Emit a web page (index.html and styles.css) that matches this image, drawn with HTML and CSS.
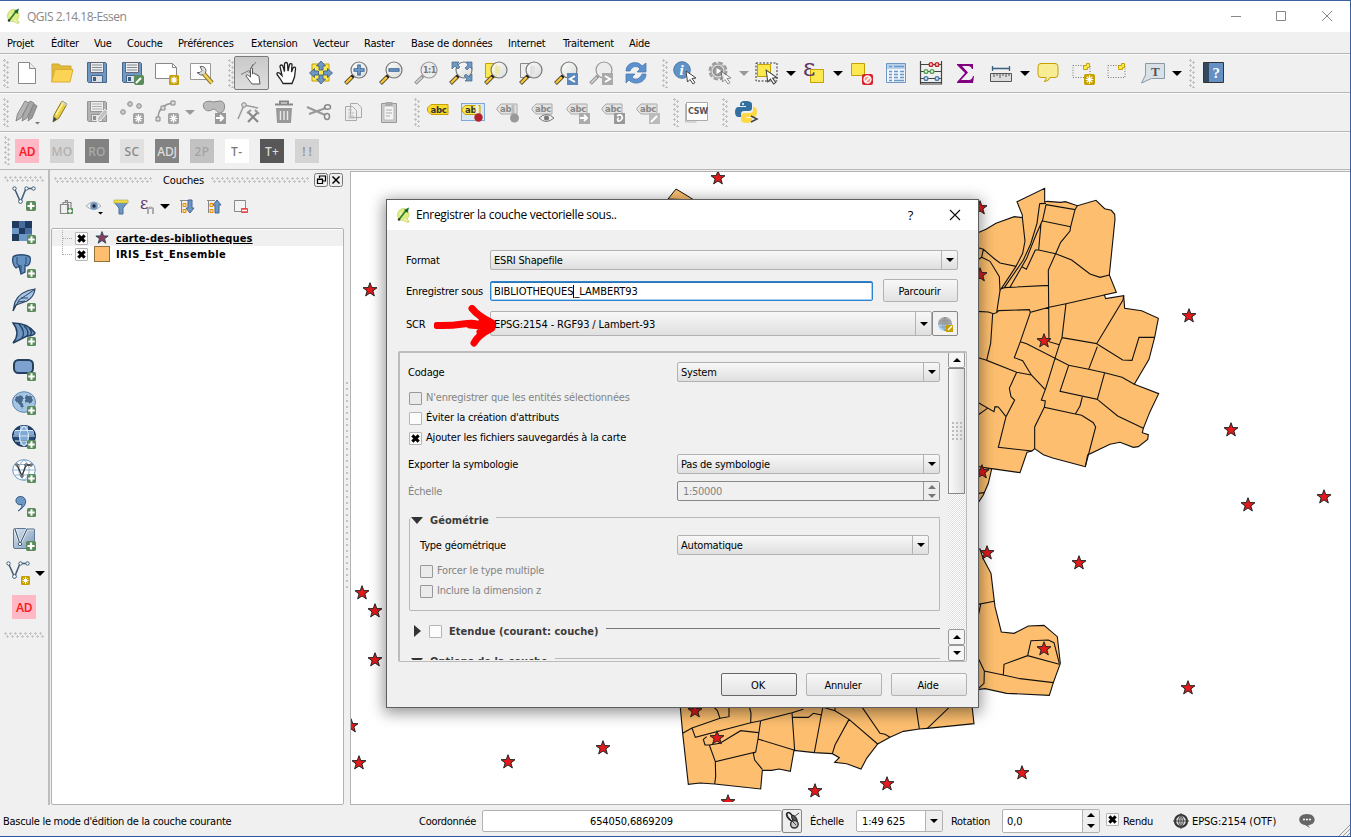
FILE: index.html
```html
<!DOCTYPE html>
<html lang="fr">
<head>
<meta charset="utf-8">
<title>QGIS 2.14.18-Essen</title>
<link rel="stylesheet" href="styles.css">
</head>
<body>
<svg class="defs" aria-hidden="true">
<defs>
<linearGradient id="lens" x1="0" y1="0" x2="1" y2="1"><stop offset="0" stop-color="#fff"/><stop offset="1" stop-color="#d6dad6"/></linearGradient>
<linearGradient id="steel" x1="0" y1="0" x2="1" y2="1"><stop offset="0" stop-color="#dce6f0"/><stop offset="1" stop-color="#7d98b8"/></linearGradient>
<path id="pin" transform="translate(8 8)" d="M0-7.300L1.750-2.400 7-2.300 2.850.9 4.350 5.900 0 2.950-4.350 5.900-2.850.9-7-2.300-1.750-2.400z"/>
</defs>
<symbol id="logo" viewBox="0 0 16 16"><path d="M7 1.500C3 2 1 6 1.500 9c.5 3.500 3 5 6 4.500l4 2 2-1-2.500-2.500c2-2 2.500-5 1.500-7C11.500 2.500 9.500 1.200 7 1.500z" fill="#dcec82" stroke="#b9cd5c" stroke-width=".6"/><path d="M4 6l2 2-2 3M8 12l3 2" stroke="#f3f8c0" stroke-width="1.400" fill="none"/><path d="M3 12.500L10 3.500" stroke="#2b7d32" stroke-width="1.700"/><path d="M8 3L13 .5 11.500 6z" fill="#17662a"/><circle cx="3" cy="12.500" r="1.200" fill="#263b20"/></symbol>
<symbol id="plus" viewBox="0 0 9 9"><rect width="9" height="9" rx="1.500" fill="#5a8c5a"/><path d="M4.500 1.300v6.400M1.300 4.500h6.400" stroke="#fff" stroke-width="2"/></symbol>
<symbol id="spark" viewBox="0 0 10 10"><rect width="10" height="10" rx="1.500" fill="#c4a000"/><path d="M5 1.200v7.600M1.500 5h7M2.500 2.500l5 5M7.500 2.500l-5 5" stroke="#fff" stroke-width="1.100"/></symbol>
<symbol id="sparkg" viewBox="0 0 10 10"><rect width="10" height="10" rx="1.500" fill="#a3a3a3"/><path d="M5 1.200v7.600M1.500 5h7M2.500 2.500l5 5M7.500 2.500l-5 5" stroke="#fff" stroke-width="1.100"/></symbol>
<symbol id="mag" viewBox="0 0 24 24"><path d="M9 15L1.500 22.500" stroke="#4b4b3a" stroke-width="4"/><path d="M8 16L2 22" stroke="#fcc32f" stroke-width="2.400"/><path d="M10 14l-2 2" stroke="#111" stroke-width="3"/><circle cx="15" cy="9" r="8" fill="url(#lens)" fill-opacity=".86" stroke="#777" stroke-width="1.200"/></symbol>
<symbol id="magg" viewBox="0 0 24 24"><path d="M9 15L1.500 22.500" stroke="#888" stroke-width="3.500"/><path d="M8 16L2 22" stroke="#ccc" stroke-width="2"/><circle cx="15" cy="9" r="8" fill="#ececec" stroke="#999" stroke-width="1.200"/></symbol>
<symbol id="floppy" viewBox="0 0 24 24"><path d="M2.500 1.500h18l1 1v19h-18l-1-1z" fill="#6f98c5" stroke="#48678b"/><path d="M5.500 1.500h13v10h-13z" fill="#e9eef2" stroke="#667"/><path d="M7 4h10M7 6.500h10M7 9h10" stroke="#888"/><path d="M6.500 14.500h11v7h-11z" fill="#dde1e4" stroke="#48678b"/><path d="M8 16h3v4H8z" fill="#3b5d85"/></symbol>
<symbol id="cursor" viewBox="0 0 12 15"><path d="M1 1l10 7-4 .5 3 4-2 1.500-3-4.500L2.500 12z" fill="#fff" stroke="#444"/></symbol>
<symbol id="tag" viewBox="0 0 22 12"><path d="M5 1h16v10H5L1 7V5z" fill="#e3e3e3" stroke="#aaa"/></symbol>
<symbol id="vec" viewBox="0 0 24 18"><path d="M2.500 2.500L8.500 16 14 2.500h7" fill="none" stroke="#3e5b77" stroke-width="1.500"/><g fill="#fff" stroke="#3e5b77"><circle cx="2.500" cy="2.500" r="1.700"/><circle cx="8.500" cy="15.500" r="1.900"/><circle cx="14.500" cy="2.500" r="1.700"/><circle cx="21.500" cy="2.500" r="1.700"/></g></symbol>
</svg>

<div class="window">
<header class="titlebar"><svg class="logo"><use href="#logo"/></svg><span class="apptitle">QGIS 2.14.18-Essen</span>
<svg class="winbtns" viewBox="0 0 110 14"><path d="M1 7.500h10M46.500 2.500h9v9h-9zM92 2l10 10M102 2L92 12" fill="none" stroke="#888"/></svg></header>
<nav class="menubar"><span>Projet</span><span>Éditer</span><span>Vue</span><span>Couche</span><span>Préférences</span><span>Extension</span><span>Vecteur</span><span>Raster</span><span>Base de données</span><span>Internet</span><span>Traitement</span><span>Aide</span></nav>

<div class="toolbar">
<i class="grip first"></i>
<b class="c"><svg><path d="M3.500 1.500h11l6 6v15h-17z" fill="#fff" stroke="#888"/><path d="M14.500 1.500v6h6" fill="#eee" stroke="#888"/></svg></b>
<b class="c"><svg><path d="M2 20V3h7l2 2h10v4" fill="#e2b93a" stroke="#d1a52f"/><path d="M1.500 21L5 8.500h18L20 21z" fill="#fcd354" stroke="#dbac35"/></svg></b>
<b class="c"><svg><use href="#floppy"/></svg></b>
<b class="c"><svg><use href="#floppy"/><rect x="14" y="14" width="10" height="10" rx="2" fill="#5a8c5a"/><path d="M16 22l5-5" stroke="#fff" stroke-width="2"/></svg></b>
<b class="c"><svg><path d="M.5 2.500h17l4 4v11H.5z" fill="#fff" stroke="#888"/><path d="M17.500 2.500v4h4" fill="none" stroke="#888"/><use href="#spark" x="14" y="14" width="10" height="10"/></svg></b>
<b class="c"><svg><path d="M.5 2.500h20v16H.5z" fill="#fff" stroke="#999"/><path d="M10 5.500q5-1 6 4l-1 4q-5 2-8-2l3 0 2-2z" fill="#ddd" stroke="#666"/><path d="M14 13l8 9" stroke="#8b7122" stroke-width="4.500"/><path d="M14 13l8 9" stroke="#f1d460" stroke-width="2.500"/></svg></b>
<i class="grip"></i>
<b class="c on"><svg><path d="M13 23l-3-4-3-4c0-1.500 1.500-1.500 2.500-.5l2 1.500V8c0-1.800 2-1.800 2 0V13c1-1.500 2.500-1 2.500.5 1-1 2-.5 2 1 1.500-.5 2 .5 2 1.500l1 7z" fill="#fff" stroke="#555"/><path d="M11 8L17 1M2 13.500l8-4M10 12l4-9" stroke="#777" fill="none"/></svg></b>
<b class="c"><svg><path d="M7 22.500l-3-5-3-4c-.5-2.500 2-2.500 3.500-.5l1.500 1.500-2-9c0-2 2.500-2 3 0l1.500 5V3c0-2 3-2 3 0l.5 7 1.500-6.500c.5-1.500 3-1 2.500.5l-.5 7 1.500-4c1-1.500 3-1 2.500 1l-1 8-2.500 6.500z" fill="#fff" stroke="#222" stroke-width="1.300" transform="translate(2 0)"/></svg></b>
<b class="c"><svg><path d="M3 3h17v17H3z" fill="#fce94f" stroke="#c4a000"/><path d="M12 0l4.500 5h-2.500v4h-4V5H7.500zM12 23l-4.500-5h2.500v-4h4v4h2.500zM.5 12l5-4.500v2.500h4v4h-4v2.500zM23.500 12l-5-4.500v2.500h-4v4h4v2.500z" fill="#6d97c4" stroke="#38587c" stroke-width=".8"/></svg></b>
<b class="c"><svg><use href="#mag"/><path d="M15 3.500v11M9.500 9h11" stroke="#355f92" stroke-width="3.500"/><path d="M15 4.500v9M10.500 9h9" stroke="#6d97c4" stroke-width="1.800"/></svg></b>
<b class="c"><svg><use href="#mag"/><path d="M9.500 9h11" stroke="#355f92" stroke-width="3.500"/><path d="M10.500 9h9" stroke="#6d97c4" stroke-width="1.600"/></svg></b>
<b class="c"><svg><use href="#magg"/><text x="9" y="12" class="one">1:1</text></svg></b>
<b class="c"><svg><use href="#mag"/><path d="M3 1h7l-2 2 3 3-2 2-3-3-3 3zM23 1v7l-2-2-3 3-2-2 3-3-2-3zM23 20h-7l2-2-3-3 2-2 3 3 3-3z" fill="#6d97c4" stroke="#446487" stroke-width=".7"/></svg></b>
<b class="c"><svg><path d="M1.500 2.500h11v14h-11z" fill="#fce94f" stroke="#c4a000"/><use href="#mag"/><path d="M11 5h5v8h-5z" fill="#eee79b" opacity=".8"/></svg></b>
<b class="c"><svg><path d="M1.500 2.500h11v14h-11z" fill="#eee" stroke="#888"/><use href="#mag"/><path d="M11 5h5v8h-5z" fill="#ddd" opacity=".7"/></svg></b>
<b class="c"><svg><use href="#mag"/><path d="M13 12h11v12H13z" fill="#5a8abd"/><path d="M21 15l-5 3 5 3" fill="none" stroke="#fff" stroke-width="2"/></svg></b>
<b class="c"><svg><use href="#magg"/><path d="M13 12h11v12H13z" fill="#aaa"/><path d="M16 15l5 3-5 3" fill="none" stroke="#fff" stroke-width="2"/></svg></b>
<b class="c"><svg><path d="M2 10C2 1 14-1 18 5l4-3v9h-9l3-3c-3-4-8-3-10 2zM22 13c0 9-12 12-17 6l-3 3v-9h9l-3 3c3 4 8 2 10-3z" fill="#5d92cf" stroke="#4174ad" stroke-width=".7"/></svg></b>
<i class="grip g3"></i>
<b class="c"><svg><circle cx="9" cy="9" r="8.300" fill="#5f93c7" stroke="#4a78a6"/><text x="6.500" y="14" class="info">i</text><use href="#cursor" x="12" y="9" width="12" height="15"/></svg></b>
<b class="c"><svg><circle cx="10" cy="10" r="8.500" fill="#ddd" stroke="#999" stroke-width="2" stroke-dasharray="4.500 2.200"/><circle cx="10" cy="10" r="7" fill="#ddd" stroke="#999"/><circle cx="10" cy="10" r="4.800" fill="#999" stroke="#888"/><path d="M8.500 7l5 3-5 3z" fill="#fff"/><use href="#cursor" x="12" y="9" width="12" height="15" opacity=".6"/></svg></b><i class="dd off"></i>
<b class="c"><svg><path d="M1 2h21v18H1z" fill="none" stroke="#333" stroke-dasharray="2 1.500"/><path d="M2.500 3.500h13v12h-13z" fill="#fce94f" stroke="#c4a000"/><use href="#cursor" x="10" y="8" width="13" height="16"/></svg></b><i class="dd"></i>
<b class="c"><svg><path d="M8.500 8.500h13v13h-13z" fill="#fce94f" stroke="#c4a000"/><text x="1" y="15" class="eps">ε</text></svg></b><i class="dd"></i>
<b class="c"><svg><path d="M2.500 2.500h13v12h-13z" fill="#fce94f" stroke="#c4a000"/><rect x="13" y="13" width="11" height="11" rx="2" fill="#d8232b"/><circle cx="18.500" cy="18.500" r="3.500" fill="#e98" stroke="#fff" stroke-width="1.300"/><path d="M16 21l5-5" stroke="#fff" stroke-width="1.400"/></svg></b>
<b class="c"><svg><path d="M2.500 2.500h19v19h-19z" fill="#eef5fc" stroke="#6d97c4"/><path d="M3 3h18v5H3z" fill="#b8d2ec"/><path d="M5 5.500h3M10 5.500h10M5 10.500h3M10 10.500h4M16 10.500h4M5 13.500h3M10 13.500h4M16 13.500h4M5 16.500h3M10 16.500h4M16 16.500h4M5 19.500h3M10 19.500h10" stroke="#6d97c4" stroke-width="1.300"/></svg></b>
<b class="c"><svg><path d="M1.500 0v23h21V0M2 3.500h20M2 10.500h20M2 17.500h20M1 21.500h22" fill="none" stroke="#444" stroke-width="1.200"/><g fill="#f9c6c6" stroke="#b22" stroke-width="1.300"><circle cx="12" cy="3.500" r="1.900"/><circle cx="18" cy="3.500" r="1.900"/></g><g fill="#cfc" stroke="#5a9a5a" stroke-width="1.300"><circle cx="7" cy="10.500" r="1.900"/><circle cx="13" cy="10.500" r="1.900"/></g><g fill="#cdf" stroke="#47789f" stroke-width="1.300"><circle cx="7" cy="17.500" r="1.900"/><circle cx="18" cy="17.500" r="1.900"/></g></svg></b>
<b class="c"><svg><path d="M3 3h16v5h-1q-1-3-4-3H8l6 6.500L7 19h8q3 0 4-4h1l-1 7H3v-1l8-9L3 4z" fill="#800080"/></svg></b>
<b class="c"><svg><path d="M3 7.500h18M3.500 5v5M20.500 5v5" stroke="#39607d" stroke-width="1.300"/><path d="M1.500 12.500h21v8h-21z" fill="#ddd" stroke="#555"/><path d="M5 13v3M8 13v2M11 13v4M14 13v2M17 13v3M20 13v2" stroke="#555"/></svg></b><i class="dd"></i>
<b class="c"><svg><path d="M5 2.500h14q3 0 3 3v8q0 3-3 3h-5q-1 4-6 4 3-1 2-4H5q-3 0-3-3v-8q0-3 3-3z" fill="#f8ec95" stroke="#c4a000"/></svg></b>
<b class="c"><svg><path d="M2 4.500h17v12H2z" fill="none" stroke="#777" stroke-dasharray="1 1.500"/><path d="M12.500 7.500v-3h3v-2h3v4h-2v2h-4z" fill="#fce94f" stroke="#c4a000"/><use href="#spark" x="13" y="13" width="11" height="11"/></svg></b>
<b class="c"><svg><path d="M2 4.500h17v12H2z" fill="none" stroke="#777" stroke-dasharray="1 1.500"/><path d="M12.500 7.500v-3h3v-2h3v4h-2v2h-4z" fill="#fce94f" stroke="#c4a000"/></svg></b>
<b class="c"><svg><path d="M4.500 2.500h19v15h-13L.5 22l4-8z" fill="#d8e1e7" stroke="#8a9aa5"/><text x="10" y="15" class="tee">T</text></svg></b><i class="dd"></i>
<i class="grip g4"></i>
<b class="c"><svg><path d="M1.500 1.500h20v20h-20z" fill="#6590c4" stroke="#333"/><path d="M2 2h5v19H2z" fill="#34495e"/><text x="10.500" y="17" class="help">?</text></svg></b>
</div>

<div class="toolbar r2">
<i class="grip first"></i>
<b class="c"><svg><path d="M1 21l1.500-7L10 1l4 2-8 15z" fill="#b5b5b5" stroke="#888"/><path d="M7 21l1.500-7L15 1l4 2-7 15z" fill="#aaa" stroke="#888"/><path d="M13 21l1-6L19 4l3 2-5 12z" fill="#999" stroke="#888"/><path d="M20 22h5l-2.500 2.500z" fill="#777"/></svg></b>
<b class="c"><svg><path d="M3 22l1-7L12 1l5 3-8 14z" fill="#e9cf42" stroke="#86752d"/><path d="M12 1l5 3-1 2-5-3z" fill="#ccc"/><path d="M6 15l7-12" stroke="#fff59b" stroke-width="1.500"/><path d="M3 22l1-5 3 2z" fill="#444"/></svg></b>
<b class="c"><svg class="gray"><use href="#floppy"/><path d="M12 22l1-5 7-8 3 3-7 8z" fill="#aaa" stroke="#eee"/></svg></b>
<b class="c"><svg><g fill="#ccc" stroke="#888"><circle cx="3" cy="12" r="2.300"/><circle cx="10" cy="4" r="2.300"/><circle cx="19" cy="6" r="2.300"/></g><use href="#sparkg" x="13" y="13" width="11" height="11"/></svg></b>
<b class="c"><svg><path d="M3 19C3 9 8 4 19 3" fill="none" stroke="#999" stroke-width="1.500"/><path d="M1 17h4v4H1zM6 6h4v4H6zM16 1h4v4h-4z" fill="#ddd" stroke="#888"/><use href="#sparkg" x="13" y="13" width="11" height="11"/></svg></b><i class="dd off"></i>
<b class="c"><svg><path d="M2 8C-1 2 6 0 11 2l7-1c6 0 6 10 1 12-5 0-4-4-8-4-3 3-8 2-9-1z" fill="#bbb" stroke="#888"/><path d="M13 13h11v11H13z" fill="#999"/><path d="M14 18h7M18 15l3 3-3 3" stroke="#fff" stroke-width="2" fill="none"/></svg></b>
<b class="c"><svg><path d="M1 19L7 5l14 3" fill="none" stroke="#999" stroke-width="1.500"/><circle cx="7" cy="5" r="2.300" fill="#ddd" stroke="#888"/><path d="M11 12l10 10M11 22l10-10" stroke="#888" stroke-width="2.200"/><path d="M10 13l4-3M18 10l4 4" stroke="#999" stroke-width="2"/></svg></b>
<b class="c"><svg><path d="M3 4.500h18M8 4V1.500h8V4" fill="none" stroke="#888" stroke-width="2"/><path d="M4 8h16l-1 15H5z" fill="#999"/><path d="M8.500 11v9M12 11v9M15.500 11v9" stroke="#e8e8e8" stroke-width="1.500"/></svg></b>
<b class="c"><svg><path d="M0 7l18 8M2 14L19 8" stroke="#999" stroke-width="2"/><ellipse cx="20.500" cy="7" rx="3" ry="2.300" fill="none" stroke="#888" stroke-width="1.500"/><ellipse cx="20" cy="16.500" rx="2.500" ry="3" fill="none" stroke="#888" stroke-width="1.500"/></svg></b>
<b class="c"><svg><path d="M8.500 3.500h7l4 4v10h-11zM3.500 6.500h7l4 4v10h-11z" fill="#eee" stroke="#aaa"/><path d="M6 10h4M6 13h6M6 16h6M6 18h6" stroke="#bbb"/></svg></b>
<b class="c"><svg><path d="M4.500 3.500h15v19h-15z" fill="#ccc" stroke="#999"/><path d="M7 6h10v14H7z" fill="#f4f4f4" stroke="#bbb"/><path d="M8.500 2h7v4h-7z" fill="#aaa"/><path d="M9 10h6M9 13h6M9 16h4" stroke="#aaa"/></svg></b>
<i class="grip g5"></i>
<b class="c"><svg><path d="M5 4.500h17v10H5L1.500 11V8z" fill="#fcd92b" stroke="#c4a000"/><text x="4.500" y="13" class="abc">abc</text></svg></b>
<b class="c sel"><svg><path d="M4 5.500h15v9H4L1 11V9z" fill="#fce94f" stroke="#c4a000"/><text x="4" y="13" class="abc">ab</text><path d="M16 5v9" stroke="#eee" stroke-width="3"/><circle cx="17.500" cy="17.500" r="4.200" fill="#b3222a"/></svg></b>
<b class="c"><svg><use href="#tag" y="3" width="22" height="12"/><text x="4" y="12" class="abc g">ab</text><path d="M17 5v9" stroke="#bbb" stroke-width="3"/><circle cx="18.500" cy="18" r="4.500" fill="#999"/></svg></b>
<b class="c"><svg><use href="#tag" y="3" width="22" height="12"/><text x="4" y="12" class="abc g">abc</text><path d="M8 18q8-7 15 0-8 7-15 0z" fill="#eee" stroke="#777"/><circle cx="15.500" cy="18" r="2.500" fill="#777"/></svg></b>
<b class="c"><svg><use href="#tag" y="3" width="22" height="12"/><text x="4" y="12" class="abc g">abc</text><path d="M13 13h11v11H13z" fill="#aaa"/><path d="M14 18h7M18 15l3 3-3 3" stroke="#fff" stroke-width="1.800" fill="none"/></svg></b>
<b class="c"><svg><use href="#tag" y="3" width="22" height="12"/><text x="4" y="12" class="abc g">abc</text><path d="M13 13h11v11H13z" fill="#999"/><path d="M16 16c4-3 7 1 4 4s-5-1-2-2" stroke="#fff" stroke-width="1.600" fill="none"/></svg></b>
<b class="c"><svg><use href="#tag" y="3" width="22" height="12"/><text x="4" y="12" class="abc g">abc</text><path d="M13 13h11v11H13z" fill="#bbb"/><path d="M15 22l6-6" stroke="#fff" stroke-width="2"/></svg></b>
<i class="grip g6"></i>
<b class="c"><svg><path d="M.5 4v18h11" fill="none" stroke="#bbb"/><path d="M1.500 2.500h21v18h-21z" fill="#fff" stroke="#aaa"/><text x="3" y="14" class="csw">CSW</text></svg></b>
<i class="grip g7"></i>
<b class="c"><svg><path d="M12 1C6 1 6 3 6 6h6v1H4C0 7 0 17 4 17h3v-3q0-3 3-3h5q3 0 3-3V4c0-2-3-3-6-3z" fill="#33709f"/><path d="M12 23c6 0 6-2 6-5h-6v-1h8c4 0 4-10 0-10h-1v3q0 3-3 3h-5q-4 0-4 3v4c0 2 2 3 5 3z" fill="#ffd845"/><circle cx="9" cy="4" r="1" fill="#fff"/><path d="M17 16l6 3-6 3" fill="none" stroke="#444" stroke-width="1.500"/></svg></b>
</div>

<div class="toolbar r3"><i class="grip first"></i>
<b class="c"><span class="sq ad">AD</span></b><b class="c"><span class="sq mo">MO</span></b><b class="c"><span class="sq ro">RO</span></b><b class="c"><span class="sq sc">SC</span></b><b class="c"><span class="sq adj">ADJ</span></b><b class="c"><span class="sq p2">2P</span></b><b class="c"><span class="sq tm">T-</span></b><b class="c"><span class="sq tp">T+</span></b><b class="c"><span class="sq ex">!!</span></b>
</div>

<main class="work">
<aside class="side">
<i class="hgrip"></i>
<b class="v"><svg><use href="#vec" width="24" height="18"/><use href="#plus" x="14" y="15" width="10" height="10"/></svg></b>
<b class="v"><svg><path d="M0 1h20v20H0z" fill="#6d97c4"/><path d="M0 1h7v7H0zM13 1h7v7h-7zM7 8h6v6H7zM0 14h7v7H0z" fill="#1f3a5f"/><path d="M7 1h6v7H7zM13 8h7v6h-7z" fill="#476d9c"/><use href="#plus" x="15" y="15" width="9" height="9"/></svg></b>
<b class="v"><svg><path d="M1 3c3-3 13-3 17 0 1 3 0 8-3 9l-2-1v7l-4 2-2-8-3 2c-3-2-4-8-3-11z" fill="#6591c2" stroke="#294c75" stroke-width="1.300"/><path d="M5 3v7l3 2M14 3v7M9 11v7" fill="none" stroke="#294c75"/><use href="#plus" x="15" y="15" width="9" height="9"/></svg></b>
<b class="v"><svg><path d="M1 23L3 14Q8 3 23 1q-1 8-8 12L4 17z" fill="#a8c7e8" stroke="#2c4662" stroke-width="1.200"/><path d="M1 23L7 12 22 2M6 14l7-1M9 10l7 0" fill="none" stroke="#2c4662"/><use href="#plus" x="15" y="15" width="9" height="9"/></svg></b>
<b class="v"><svg><path d="M1 1q15 0 22 10-1 3-8 3L1 21Q9 11 1 1z" fill="#6d97c4" stroke="#243f60" stroke-width="1.400"/><path d="M7 2q7 8 3 14M12 4q6 5 3 11M17 6q4 4 1 8" fill="none" stroke="#243f60" stroke-width="1.300"/><use href="#plus" x="15" y="15" width="9" height="9"/></svg></b>
<b class="v"><svg><rect x="2" y="3" width="19" height="13" rx="4.500" fill="#7da2d0" stroke="#243f60" stroke-width="2"/><use href="#plus" x="15" y="15" width="9" height="9"/></svg></b>
<b class="v"><svg><ellipse cx="12" cy="11" rx="11.500" ry="10.300" fill="#a4c4e4" stroke="#5c83ad"/><path d="M3 6l6-2 3 3-2 4 2 4-2 3-3-5-4-3zM13 4l7 1 1 5-3 3-3-2-2 2 0-5z" fill="#46698c" stroke="#d2e4f4" stroke-dasharray="1 2"/><use href="#plus" x="15" y="15" width="9" height="9"/></svg></b>
<b class="v"><svg><ellipse cx="12" cy="11" rx="11.300" ry="10.300" fill="#254a76" stroke="#1d3557" stroke-width="1.300"/><path d="M8 1h8v4H8zM8 6h8v9H8zM2 6h5v4H2zM17 6h5v4h-5zM8 16h8v4H8z" fill="#7fa9d6"/><path d="M1 11h22M3 5.500h18M3 16h18M12 1C6 5 6 17 12 21M12 1c6 4 6 16 0 20" fill="none" stroke="#dbe8f4" stroke-width="1.200"/><use href="#plus" x="15" y="15" width="9" height="9"/></svg></b>
<b class="v"><svg><ellipse cx="12" cy="11" rx="11.300" ry="10.300" fill="#fff" stroke="#6d97c4"/><path d="M1 11h22M3 5.500h18M3 16h18M12 1C5 5 5 17 12 21M12 1c7 4 7 16 0 20" fill="none" stroke="#8fb2d9"/><path d="M5 6l5 11 4-11h6" fill="none" stroke="#333" stroke-width="1.400"/><g fill="#fff" stroke="#333"><circle cx="5" cy="6" r="1.200"/><circle cx="10" cy="17" r="1.200"/><circle cx="14" cy="6" r="1.200"/><circle cx="19" cy="6" r="1.200"/></g><use href="#plus" x="15" y="15" width="9" height="9"/></svg></b>
<b class="v"><svg><path d="M6 18c3-2 4-4 4-6.500-6 1.500-8-5-4-7.500 7-3 13 7 0 14z" fill="#6d97c4" stroke="#345c88"/><use href="#plus" x="15" y="15" width="9" height="9"/></svg></b>
<b class="v"><svg><rect x="1.500" y="1.500" width="21" height="20" rx="1.500" fill="url(#steel)" stroke="#5b7897"/><path d="M3 2l5 15 7-15h7" fill="none" stroke="#fff" stroke-width="2.500"/><path d="M3 2l5 15 7-15h7" fill="none" stroke="#3e5b77" stroke-width="1.200"/><circle cx="8" cy="17" r="1.700" fill="#fff" stroke="#3e5b77"/><use href="#plus" x="14" y="14" width="10" height="10"/></svg></b>
<b class="v new"><svg><use href="#vec" width="24" height="18"/><use href="#spark" x="15" y="15" width="9" height="9"/></svg><i class="dd"></i></b>
<b class="v"><span class="sq ad">AD</span></b>
<i class="hgrip end"></i>
</aside>

<section class="layers">
<div class="dock"><i class="hgrip"></i><span>Couches</span><i class="hgrip"></i><svg class="dockbtn" viewBox="0 0 14 14"><rect x=".5" y=".5" width="13" height="13" rx="2" fill="#eee" stroke="#777"/><path d="M5.500 5V3h6v5H9M5 3h7M3.500 6.500h5v4h-5zM3 6h6" stroke="#000" fill="none" stroke-width="1.200"/></svg><svg class="dockbtn" viewBox="0 0 14 14"><rect x=".5" y=".5" width="13" height="13" rx="2" fill="#eee" stroke="#777"/><path d="M3.500 3.500l7 7M10.500 3.500l-7 7" stroke="#000" stroke-width="1.500"/></svg></div>
<div class="ltools">
<svg><path d="M1.500 5.500h8v9h-8zM4 5V3.500h8v8H10M6.500 3V1.500h2V11" fill="none" stroke="#888" stroke-width="1.200"/><use href="#plus" x="8" y="9" width="6" height="6"/></svg>
<svg><path d="M0 7q8-8 15 0-7 7-15 0z" fill="#f4f4f4" stroke="#aaa"/><circle cx="8" cy="7" r="3.800" fill="#6c98c4"/><circle cx="8" cy="7" r="1.700" fill="#223"/><path d="M12 13h5l-2.500 2.500z"/></svg>
<svg><path d="M1 3l5 6v6h4V9l5-6z" fill="#6d97c4" stroke="#4a6f99"/><path d="M1 1h14v3H1z" fill="#f4df43" stroke="#a9a14a" stroke-width=".6"/></svg>
<svg><text x="0" y="10" class="eps small">ε</text><path d="M7 15V9q4-3 7 0v6h-2v-5h-3v5z" fill="#aaa"/></svg><i class="dd"></i>
<svg><path d="M1 1.500h8M2.500 2v12" stroke="#888"/><path d="M4 4.500h3v3H4zM4 10.500h3v3H4z" fill="#ffe1a6" stroke="#eb8900"/><path d="M9 1h4v8h2l-4 5-4-5h2z" fill="#6d97c4" stroke="#426790"/></svg>
<svg><path d="M1 1.500h8M2.500 2v12" stroke="#888"/><path d="M4 4.500h3v3H4zM4 10.500h3v3H4z" fill="#ffe1a6" stroke="#eb8900"/><path d="M9 14h4V6h2l-4-5-4 5h2z" fill="#6d97c4" stroke="#426790"/></svg>
<svg><path d="M1.500 1.500h11v11h-11z" fill="#f4f4f4" stroke="#888"/><rect x="8" y="9" width="7" height="5" rx="1" fill="#e34a4a"/><path d="M9 11.500h5" stroke="#fff" stroke-width="1.500"/></svg>
</div>
<div class="tree">
<div class="node active"><i class="branch"></i><i class="cb x"></i><svg class="lstar" viewBox="0 0 16 16"><use href="#pin"/></svg><u>carte-des-bibliotheques</u></div>
<div class="node"><i class="branch"></i><i class="cb x"></i><i class="swatch"></i><span class="iris">IRIS_Est_Ensemble</span></div>
</div>
</section>
<i class="splitter"></i>
<svg class="map" viewBox="351 172 997 631" preserveAspectRatio="xMinYMin slice">
<g class="land">
<path d="M668 199l8-10 10 6 8 5z"/>
<g transform="translate(960 170) scale(.33333)">
<path d="M20 200L57 187 78 178 108 160 163 140 187 143 187 135 171 95 254 55 254 96 262 94 302 97 316 95 352 107 408 91 434 116 454 121 464 133 465 148 448 315 469 367 433 375 437 386 491 377 494 415 545 422 595 445 584 502 567 568 523 643 596 671 570 725 550 775 547 788 565 794 563 808 535 830 520 832 480 817 450 823 383 855 376 890 371 889 278 864 250 854 224 836 216 843 201 847 180 908 95 896 20 890z"/>
<path class="in" d="M187 143L195 213 188 250 168 289 120 279 104 267 70 238 50 232M70 238L65 262 50 272M65 262L90 274 118 320 120 362 110 428 100 431 85 426 50 424M168 289L120 362M239 101L231 160 212 222 190 270 133 353M239 101L258 100M258 104L345 119 352 107M258 104L248 150 243 160 236 240M248 153L332 170M345 119L332 170 330 183 302 217 287 251M236 240L287 251 335 270 390 312 420 322 448 315M236 240L226 240 199 298 186 290M150 352L200 265 230 190 248 150M120 358L133 353 265 346M287 251L265 300 267 515 298 524M110 428L116 422 208 419 211 427 267 412 318 401 433 375M211 427L205 445 181 515 163 563 188 572 214 615 255 658M181 515L200 521 285 565 298 524 306 503 318 401M306 503L410 521 489 390 491 377M410 521L488 570 516 571 537 502 584 502M412 530L386 598M285 565L326 586 386 598 434 608 486 622 523 643M326 586L300 664 412 688 434 608M412 688L473 738 550 775M367 681L360 708 346 732M285 565L257 656 244 690 256 693 253 712 346 732 365 736 400 758 407 771 376 890M253 712L224 771 224 836M98 431L92 520 80 571 170 607 214 615M50 562L80 571M170 607L148 655 153 680 164 690 138 740 115 832 216 843M50 695L102 725 105 710 115 711 138 740M50 738L82 715"/>
</g>
<g transform="translate(670 450) scale(.33333)">
<path d="M900 45L965 57 955 100 940 135 920 165 900 170z"/>
<path d="M900 294L930 297 940 327 963 370 973 454 975 470 994 546 1032 550 1075 528 1122 526 1162 560 1171 640 1150 698 1138 736 1010 730 945 716 900 722z"/>
<path class="in" d="M920 131L942 128M920 464L973 454M932 463L920 520 920 615 943 663 1000 675 1050 686 1150 698M943 663L942 700 925 716M1000 675L1002 643 1073 617 1168 643M1073 617L1083 572 1135 570 1152 578 1168 640"/>
</g>
<g transform="translate(670 690) scale(.33333)">
<path d="M28 20L38 130 55 283 90 279 134 282 272 297 277 241 305 241 327 237 361 244 372 181 433 188 487 191 508 203 494 217 530 221 573 237 590 205 623 162 660 142 700 124 748 117 772 115 912 101 903 20z"/>
<path class="in" d="M38 130L66 114 150 85 177 80 177 50M66 114L76 142 242 98 272 92 366 68 400 58M150 85L142 62 130 50M242 98L243 70 238 50M366 68L374 181M272 92L264 147 257 186 136 215 137 260 134 282M118 165L136 215M118 165L150 160 212 122 265 128M118 165L105 165 100 148 110 140M264 147L374 181M257 186L250 190 254 210 277 238M366 82L415 82 430 70 454 75 433 188M454 75L459 50M459 52L495 62 537 88 495 165 487 191M537 88L623 162M575 50L630 130 645 133 660 142M738 50L748 117M772 115L840 50M495 62V50"/>
</g>
</g>
<g class="pins">
<use href="#pin" x="710" y="170"/><use href="#pin" x="362" y="282"/><use href="#pin" x="972" y="200"/><use href="#pin" x="972" y="267"/><use href="#pin" x="1181" y="308"/><use href="#pin" x="1036" y="333"/><use href="#pin" x="1223" y="422"/><use href="#pin" x="1240" y="497"/><use href="#pin" x="1316" y="489"/><use href="#pin" x="974" y="464"/><use href="#pin" x="979" y="545"/><use href="#pin" x="1071" y="555"/><use href="#pin" x="1036" y="641"/><use href="#pin" x="354" y="585"/><use href="#pin" x="367" y="603"/><use href="#pin" x="367" y="652"/><use href="#pin" x="1180" y="680"/><use href="#pin" x="343" y="718"/><use href="#pin" x="351" y="755"/><use href="#pin" x="500" y="754"/><use href="#pin" x="595" y="740"/><use href="#pin" x="687" y="703"/><use href="#pin" x="709" y="730"/><use href="#pin" x="720" y="794"/><use href="#pin" x="807" y="783"/><use href="#pin" x="879" y="776"/><use href="#pin" x="1014" y="765"/>
</g>
</svg>
</main>

<footer class="status">
<span class="msg">Bascule le mode d'édition de la couche courante</span>
<span class="lcoord">Coordonnée</span><span class="field coord">654050,6869209</span>
<span class="mouse"><svg viewBox="0 0 18 20"><ellipse cx="6.500" cy="6" rx="2.500" ry="5" transform="rotate(-35 6.500 6)" fill="none" stroke="#222" stroke-width="1.700"/><ellipse cx="11" cy="8" rx="2" ry="4" transform="rotate(-35 11 8)" fill="#555" stroke="#222"/><circle cx="11" cy="14" r="4" fill="#ccc" stroke="#333" stroke-width="1.500"/><path d="M3 5l10 10M12 5l4-3" stroke="#333"/></svg></span>
<span class="lscale">Échelle</span><span class="field scale">1:49 625<em><i class="dd"></i></em></span>
<span class="lrot">Rotation</span><span class="field rot">0,0<em><i class="up"></i><i class="dn"></i></em></span>
<i class="cb x"></i><span class="rendu">Rendu</span>
<svg class="globe" viewBox="0 0 16 16"><circle cx="8" cy="8" r="6" fill="#ddd" stroke="#333" stroke-width="2.200"/><path d="M0 8h16M8 0v16M8 2q-5 6 0 12M8 2q5 6 0 12" fill="none" stroke="#444"/></svg><span class="epsg">EPSG:2154 (OTF)</span>
<svg class="bubble" viewBox="0 0 16 15"><path d="M8 1c10 0 10 11 1 11l2 3-5-3C-2 11-2 1 8 1z" fill="#666"/><path d="M4 6.500h2M7 6.500h2M10 6.500h2" stroke="#fff" stroke-width="1.500"/></svg>
<svg class="corner" viewBox="0 0 12 12"><path d="M1 12L12 1M5 12l7-7M9 12l3-3" stroke="#999"/></svg>
</footer>
</div>

<div class="dialog" role="dialog">
<div class="dtitle"><svg class="logo"><use href="#logo"/></svg><span>Enregistrer la couche vectorielle sous..</span><span class="q">?</span><svg class="dbtns" viewBox="0 0 12 14"><path d="M1 2l10 10M11 2L1 12" stroke="#111" stroke-width="1.100"/></svg></div>
<div class="form">
<label>Format</label><span class="combo f1">ESRI Shapefile<em><i class="dd"></i></em></span>
</div>
<div class="form f2"><label>Enregistrer sous</label><span class="edit"><span class="pre">BIBLIOTHEQUES</span><i class="caret"></i><span>_LAMBERT93</span></span><span class="btn browse">Parcourir</span></div>
<div class="form f3"><label>SCR</label><span class="combo crs">EPSG:2154 - RGF93 / Lambert-93<em><i class="dd"></i></em></span><span class="crsbtn"><svg viewBox="0 0 16 16"><circle cx="8" cy="8" r="7" fill="#a9cdf0"/><path d="M1 8a7 7 0 0114 0z" fill="#aaa"/><path d="M1 8h14M2 5h12M3 11h10M8 1q-5 7 0 14M8 1q5 7 0 14M8 1v14" fill="none" stroke="#888" stroke-width=".6"/><path d="M9 9h7v7H9z" fill="#c4a000"/><path d="M11 14l4-4" stroke="#fff" stroke-width="1.500"/></svg></span></div>
<div class="scroll">
<div class="opts">
<div class="row h1"><label>Codage</label><span class="combo">System<em><i class="dd"></i></em></span></div>
<div class="check dis"><i class="cb"></i>N'enregistrer que les entités sélectionnées</div>
<div class="check"><i class="cb"></i>Éviter la création d'attributs</div>
<div class="check"><i class="cb x"></i>Ajouter les fichiers sauvegardés à la carte</div>
<div class="row h2"><label>Exporter la symbologie</label><span class="combo">Pas de symbologie<em><i class="dd"></i></em></span></div>
<div class="row h3 dis"><label>Échelle</label><span class="spin">1:50000<em><i class="up"></i><i class="dn"></i></em></span></div>
<div class="ghead"><i class="tri"></i><strong>Géométrie</strong><hr></div>
<div class="gbox">
<div class="row"><label>Type géométrique</label><span class="combo">Automatique<em><i class="dd"></i></em></span></div>
<div class="check dis"><i class="cb"></i>Forcer le type multiple</div>
<div class="check dis"><i class="cb"></i>Inclure la dimension z</div>
</div>
<div class="ghead ext"><i class="tri right"></i><i class="cb"></i><strong>Etendue (courant: couche)</strong><hr></div>
<div class="ghead last"><i class="tri"></i><strong>Options de la couche</strong><hr></div>
</div>
<div class="bar"><span class="sb"><i class="up"></i></span><span class="thumb"><i></i></span><span class="track"></span><span class="sb"><i class="up"></i></span><span class="sb"><i class="dn"></i></span></div>
</div>
<div class="actions"><span class="btn def">OK</span><span class="btn">Annuler</span><span class="btn">Aide</span></div>
<svg class="arrow" viewBox="434 305 64 44"><path d="M437 325.500Q450 326 463 324T478 325L491 328M472 308.500Q478 316 492 323L492 328Q478 335 474 343M470 325L491 327M482 321L489 327 480 332" fill="none" stroke="#fe0000" stroke-width="7" stroke-linecap="round" stroke-linejoin="round"/></svg>
</div>
</body>
</html>
```
FILE: styles.css
```css
*{box-sizing:border-box}
body{margin:0;width:1351px;height:837px;overflow:hidden;position:relative;background:#f0f0f0;color:#000;font:11px/14px "DejaVu Sans Condensed","DejaVu Sans",sans-serif;font-stretch:condensed;letter-spacing:-.2px;white-space:nowrap}
i{font-style:normal;flex:none}
b{font-weight:400}
.defs{position:absolute;width:0;height:0}
.window{width:1351px;height:837px;display:flex;flex-direction:column;border:1px solid #3a62a0;border-left:0;border-bottom-color:#2b579a}
.titlebar{height:31px;background:#fff;display:flex;align-items:center;padding-left:6px;color:#888;font:12px "Open Sans",sans-serif;letter-spacing:-.47px;flex:none;padding-bottom:1px}
.logo{width:16px;height:16px;margin-right:5px;flex:none}
.winbtns{width:110px;height:14px;margin-left:auto;margin-right:10px}
.menubar{height:21px;flex:none;display:grid;grid-template-columns:44px 43px 33px 51px 73px 62px 51px 47px 97px 55px 66px 40px;padding-left:7px;line-height:24px;letter-spacing:-.23px}
.toolbar{height:39px;flex:none;display:flex;align-items:center;border-top:1px solid #b7b7b7;box-shadow:inset 0 1px #fbfbfb}
.r3{height:38px;padding-left:.5px}
.grip{width:6px;height:29px;margin:0 0 0 8.500px;background:radial-gradient(circle at 1.500px 1.500px,#c2c2c2 1px,transparent 1.400px) 0 0/6px 5px,radial-gradient(circle at 4.500px 3.500px,#c2c2c2 1px,transparent 1.400px) 0 0/6px 5px}
.grip.first{margin:0 0 0 3px}
.grip.g3{margin-left:8px}.grip.g4{margin-left:6px;margin-right:2px}.grip.g5{margin-left:8px}.grip.g6{margin-left:8px}.grip.g7{margin-left:8px}
.c{width:35px;height:34px;display:flex;align-items:center;justify-content:center;flex:none}
.c svg,.v svg{width:24px;height:24px;display:block;overflow:visible;flex:none}
.c.on{border:1px solid #7b7b7b;border-radius:2px;background:linear-gradient(#c9c9c9,#dedede)}
.c.sel{background:linear-gradient(#dbe7f5,#dbe7f5) center/22px 16px no-repeat,linear-gradient(#7fa9da,#7fa9da) center/24px 18px no-repeat}
.gray{filter:grayscale(1);opacity:.65}
.dd{width:12px;height:10px;display:flex;align-items:center;justify-content:center}
.dd::before{content:"";border:5px solid transparent;border-top-color:#000;border-bottom:0}
.off::before{border-top-color:#999}
.sq{width:24px;height:24px;font:500 12px/25px "Noto Sans",sans-serif;letter-spacing:.3px;text-align:center;background:#d4d4d4;color:#b0b0b0}
.ad{background:#ffb9c6;color:#fb1d28;font-weight:600;letter-spacing:-.3px}
.ro{background:#828282;color:#aaa}.sc{background:#e0e0e0;color:#888}.adj{background:#838383;color:#ddd;letter-spacing:-.2px}
.p2{background:#c2c2c2;color:#a3a3a3}.tm{background:#fff;color:#777;letter-spacing:1px}.tp{background:#575757;color:#ddd}.ex{color:#909090;letter-spacing:3px;padding-left:3px}
.one{font:bold 8px "DejaVu Sans",sans-serif;fill:#777;letter-spacing:-.5px}
.info{font:italic bold 15px "Liberation Serif",serif;fill:#fff}
.eps{font:24px "DejaVu Serif",serif;fill:#5c3566}.eps.small{font-size:16px}
.tee{font:bold 13px "Liberation Serif",serif;fill:#555}
.help{font:bold 15px "Liberation Serif",serif;fill:#fff}
.abc{font:bold 8.500px "DejaVu Sans",sans-serif;fill:#333;letter-spacing:-.3px}.abc.g{fill:#888}
.csw{font:bold 8px "DejaVu Sans",sans-serif;fill:#555;letter-spacing:-.3px}
.work{flex:1;min-height:0;display:flex;border-top:1px solid #b7b7b7}
.side{width:50px;border-right:2px solid #bdbdbd;display:flex;flex-direction:column}
.hgrip{height:6px;margin:6px 4px -1px;background:radial-gradient(circle at 1.500px 1.500px,#c6c6c6 1px,transparent 1.400px) 0 0/5px 6px,radial-gradient(circle at 3.500px 4.500px,#c6c6c6 1px,transparent 1.400px) 0 0/5px 6px}
.hgrip.end{margin-top:8px}
.v{height:34.100px;padding-left:12px;display:flex;align-items:center;flex:none}
.v.new{padding-left:6px}.v .dd{margin-left:4px}
.layers{width:294px;display:flex;flex-direction:column}
.dock{height:20px;display:flex;align-items:center;padding:0 2px 0 4px;gap:2px}
.dock .hgrip{flex:1;margin:0 5px 0 0}.dock span{margin-right:5px;padding:2px 0 0 4px}
.dock span+.hgrip{margin-right:3px}
.dockbtn{width:14px;height:14px;margin:0 -.5px}
.ltools{height:38px;display:flex;align-items:center;padding:0 0 5px 9px;gap:11px}
.ltools svg{width:16px;height:16px;overflow:visible}
.ltools svg+.dd{margin:0 -3px 0 -8px}
.tree{flex:1;background:#fff;border:1px solid #b2b2b2;margin-left:1px;border-radius:2px;font-weight:700;letter-spacing:.15px;overflow:hidden}
.node{height:16px;display:flex;align-items:center}
.node u,.node span{padding-top:2px}.iris{letter-spacing:.4px}
.active{background:#f0f0f0;margin-top:1px}
.branch{width:10px;height:17px;border:1px dotted #aaa;border-width:0 0 1px 1px;margin:-15px 3px 0 10px}
.cb{width:13px;height:13px;border:1px solid #b5b5b5;background:#fcfcfc;border-radius:1px;position:relative;display:block}
.x::before,.x::after{content:"";position:absolute;left:1px;top:4px;width:9px;height:3px;background:#000;transform:rotate(45deg)}
.x::after{transform:rotate(-45deg)}
.lstar{width:14px;height:14px;fill:#8e3b56;stroke:#24445c;margin:0 7px 0 7px}
.swatch{width:16px;height:16px;background:#fdbf6f;border:1px solid #94703d;margin:0 6px}
.splitter{width:6px;background:radial-gradient(circle at 2px 2px,#c2c2c2 1px,transparent 1.400px) 1px 0/6px 6px;height:210px;margin:211px 0 0}
.map{width:1000px;height:634px;flex:none;border:1px solid #b2b2b2;border-right:0;margin-top:1px;background:#fff;padding:0 2px 2px 0}
.land{fill:#fdbf6f;stroke:#111}.land>path{stroke-width:1}.land g{stroke-width:3.300}.land .in{fill:none}
.pins{fill:#e31a1c;stroke:#222;stroke-width:1}
.status{height:31px;flex:none;display:flex;align-items:center;padding-left:3px;letter-spacing:-.28px}
.status>span:not(.field,.mouse){padding-top:2px}
.msg{width:416px}.lcoord{width:63px}
.field{height:22px;border:1px solid #b2b2b2;border-radius:2px;background:#fff;line-height:22px;display:flex;flex:none;letter-spacing:-.15px}
.coord{width:300px;justify-content:center;padding-right:1px}
.mouse{width:20px;height:24px;border:1px solid #888;border-radius:2px;background:#eee;display:flex;align-items:center;justify-content:center}.mouse svg{width:17px;height:19px}
.lscale{width:54px;padding-left:8px}.scale{width:87px;padding-left:5px}
.field em{margin-left:auto;width:17px;background:#eee;border-left:1px solid #b2b2b2;display:flex;align-items:center;justify-content:center}
.scale .dd::before{border-width:4px 4px 0}
.lrot{width:59px;padding-left:8px}.rot{width:98px;padding-left:4px;height:24px;line-height:24px}
.rot em{flex-direction:column;gap:7px}
.up,.dn{border:4px solid transparent;border-bottom-color:#000;border-top:0}.dn{border:4px solid transparent;border-top-color:#000;border-bottom:0}
.status .cb{margin:-2px 4px 0 6px}
.rendu{width:50px}.globe{width:16px;height:16px;margin-right:3px;flex:none}.epsg{width:107px;letter-spacing:-.05px}
.bubble{width:16px;height:15px}.corner{width:12px;height:12px;margin-left:auto;align-self:flex-end}

.dialog{position:absolute;left:386px;top:199px;width:593px;height:509px;border:1px solid #5f5f5f;background:#f0f0f0;box-shadow:0 3px 14px 2px rgba(0,0,0,.42);display:flex;flex-direction:column}
.dtitle{height:30px;background:#fff;display:flex;align-items:center;padding-left:9px;font:12px "Open Sans",sans-serif;letter-spacing:-.33px;margin-bottom:20px;flex:none;padding-bottom:1px}
.dtitle .logo{margin-right:4px}
.dbtns{width:12px;height:14px;margin:0 17px 0 36px}
.q{font:13px/18px "Open Sans",sans-serif;margin-left:auto}
.form{display:flex;align-items:center;padding-left:19px;height:20px;flex:none}
.form label,.row label{width:84px;flex:none;padding-top:2px}
.f2{height:23px;margin-top:9px}.f3{height:25px;margin:9px 0 15px}
.combo{height:20px;border:1px solid #b2b2b2;border-radius:2px;background:linear-gradient(#f8f8f8,#dfdfdf);display:flex;align-items:center;padding:2px 0 0 3px;flex:none}
.combo em{align-self:stretch;margin:-2px 0 0 auto;width:16px;border-left:1px solid #b2b2b2;display:flex;align-items:center;justify-content:center}
.combo .dd::before{border-width:4px 4px 0}
.f1{width:468px}
.edit{width:383px;height:20px;border:1px solid #2f83cd;box-shadow:inset 0 1px #2a76b8,inset 0 0 0 1px #a4cef4;border-radius:2px;background:#fff;display:flex;align-items:center;padding:2px 0 0 3px;letter-spacing:-.05px}
.caret{width:1px;height:13px;background:#000}
.btn{width:76px;height:23px;border:1px solid #b2b2b2;border-radius:2px;background:linear-gradient(#f8f8f8,#e2e2e2);line-height:23px;text-align:center;padding-right:2px}
.browse{margin-left:10px;width:75px}.def{border-color:#666}
.crs{width:442px;height:25px;letter-spacing:-.12px}.crsbtn{width:26px;height:25px;border:1px solid #888;border-radius:2px;display:flex;align-items:center;justify-content:center;background:#f2f2f2}.crsbtn svg{width:16px;height:16px}
.scroll{width:569px;height:311px;margin-left:11px;border:2px solid #bcbcbc;border-width:2px 1px 1px 2px;border-radius:2px;display:flex;justify-content:space-between;overflow:hidden;flex:none}
.opts{width:540px;height:307px;padding:9px 0 0 8px;overflow:hidden}
.row{display:flex;align-items:center;height:20px}.row label{width:269px}
.row .combo,.spin{width:263px}
.h1{margin-bottom:6px}.h2{margin-top:6px}.h3{margin-top:7px}
.check{height:20px;display:flex;align-items:center;gap:4px;padding-left:1px;letter-spacing:-.19px}
.dis{color:#848484}.dis .cb{background:#ebebeb;border-color:#999}
.spin{height:20px;border:1px solid #888;border-radius:2px;display:flex;align-items:center;padding:1px 0 0 5px;letter-spacing:-.3px}
.spin em{margin:-1px 0 0 auto;align-self:stretch;width:16px;border-left:1px solid #999;display:flex;flex-direction:column;align-items:center;justify-content:space-around;background:linear-gradient(#eee 48%,#999 48%,#999 52%,#eee 52%)}
.spin .up{border-bottom-color:#777}.spin .dn{border-top-color:#777}
.ghead{height:14px;display:flex;align-items:center;color:#3b3b3b;letter-spacing:.05px;margin-top:12px;padding-left:3px}
.ghead strong{padding-top:1px}
.ghead hr{flex:1;border:0;border-top:1px solid #b8b8b8;margin:0 0 5px 7px}
.tri{border:6px solid transparent;border-top:7px solid #333;border-bottom:0;margin-right:7px}
.tri.right{border:6px solid transparent;border-left:7px solid #333;border-right:0;margin:0 8px 0 3px}
.gbox{height:93px;margin:-9px 0 0 1px;border:1px solid #b8b8b8;border-top:0;border-radius:2px;padding:17px 10px 0 10px}
.gbox .row{margin-bottom:6px}.gbox .row label{width:257px}.gbox .combo{width:252px}.gbox .check{padding:0;gap:4px}
.ext{margin-top:13px}.ext .cb{margin-right:7px}.ext hr{border-color:#777}
.last{margin-top:16px}
.bar{width:17px;display:flex;flex-direction:column;margin:-1px 1px 0 0}
.sb{height:16px;border:1px solid #999;border-radius:2px;background:#f6f6f6;display:flex;align-items:center;justify-content:center;flex:none}
.thumb{height:126px;border:1px solid #888;background:linear-gradient(90deg,#fafafa,#dedede);display:flex;align-items:center;justify-content:center}.thumb i{width:12px;height:20px;background:radial-gradient(circle,#bbb 1px,transparent 1.300px) 0 0/4px 4px}
.track{flex:1;background:repeating-conic-gradient(#dedede 0 25%,#fff 0 50%) 0 0/2px 2px}
.actions{display:flex;gap:9px;justify-content:flex-end;margin-top:11px;padding-right:11px}
.arrow{position:absolute;left:47px;top:105px;width:64px;height:44px}
```
